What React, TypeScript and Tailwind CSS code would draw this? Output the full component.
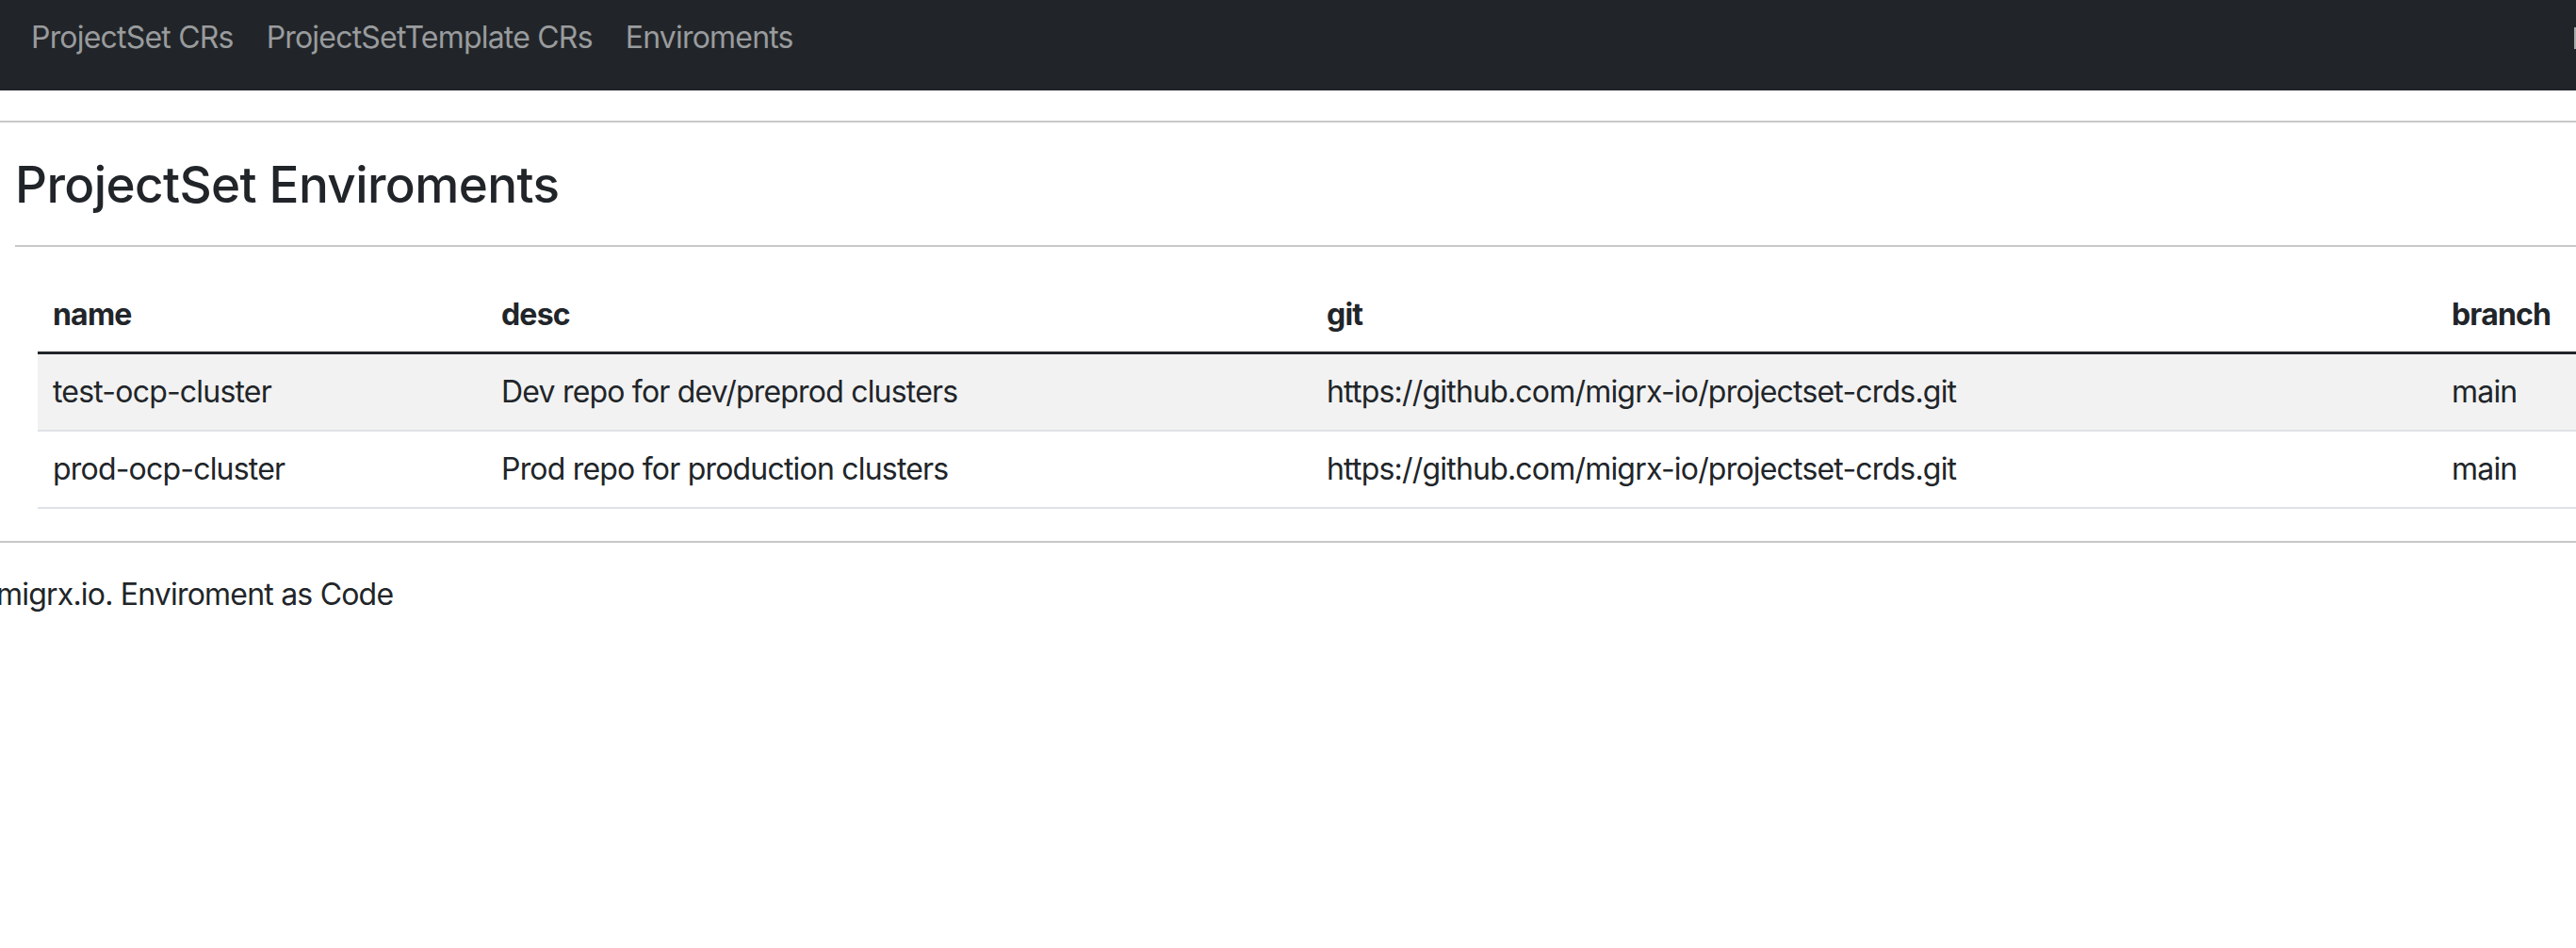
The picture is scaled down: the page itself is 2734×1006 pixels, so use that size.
import React from 'react';

interface Env {
  name: string;
  desc: string;
  git: string;
  branch: string;
}

const envs: Env[] = [
  {
    name: 'test-ocp-cluster',
    desc: 'Dev repo for dev/preprod clusters',
    git: 'https://github.com/migrx-io/projectset-crds.git',
    branch: 'main',
  },
  {
    name: 'prod-ocp-cluster',
    desc: 'Prod repo for production clusters',
    git: 'https://github.com/migrx-io/projectset-crds.git',
    branch: 'main',
  },
];

const links = ['ProjectSet CRs', 'ProjectSetTemplate CRs', 'Enviroments'];

export default function App() {
  return (
    <div className="w-full min-h-screen overflow-hidden bg-white text-[#212529] font-['Inter','Noto_Sans',sans-serif] tracking-[-0.8px]">
      {/* Navbar */}
      <nav className="h-[96px] bg-[#212529] flex items-start pt-[16px] pl-[33px]">
        <ul className="flex items-center gap-[35px]">
          {links.map((l) => (
            <li key={l}>
              <a href="#" className="text-[32px] leading-[48px] text-[#999b9d]">
                {l}
              </a>
            </li>
          ))}
        </ul>
        <div className="ml-auto mt-[13px] w-[2px] h-[23px] bg-[#a8a8a8]" />
      </nav>

      <hr className="mt-[32px] border-0 h-[2px] bg-[#c8c8c8]" />

      {/* Content */}
      <main className="pl-[16px] pt-[34px]">
        <h3 className="text-[53px] leading-[64px] font-medium tracking-[-0.6px]">ProjectSet Enviroments</h3>
        <hr className="mt-[32px] border-0 h-[2px] bg-[#c8c8c8]" />

        <div className="pl-[24px] pt-[33px]">
          <table className="w-[2760px] text-[32px] leading-[48px] text-left border-collapse">
            <thead>
              <tr className="border-b-[3px] border-[#212529]">
                <th className="w-[476px] px-[16px] py-[15px] font-bold">name</th>
                <th className="w-[876px] px-[16px] py-[15px] font-bold">desc</th>
                <th className="w-[1194px] px-[16px] py-[15px] font-bold">git</th>
                <th className="px-[16px] py-[15px] font-bold">branch</th>
              </tr>
            </thead>
            <tbody>
              {envs.map((e, i) => (
                <tr
                  key={e.name}
                  className={`border-b-[2px] border-[#dee2e6] ${i % 2 === 0 ? 'bg-[#f2f2f2]' : 'bg-white'}`}
                >
                  <td className="px-[16px] py-[16px]">{e.name}</td>
                  <td className="px-[16px] py-[16px]">{e.desc}</td>
                  <td className="px-[16px] py-[16px]">{e.git}</td>
                  <td className="px-[16px] py-[16px]">{e.branch}</td>
                </tr>
              ))}
            </tbody>
          </table>
        </div>
      </main>

      <hr className="mt-[34px] border-0 h-[2px] bg-[#c8c8c8]" />

      {/* Footer */}
      <footer className="pt-[31px] ml-[-4px]">
        <p className="text-[32px] leading-[48px]">migrx.io. Enviroment as Code</p>
      </footer>
    </div>
  );
}
